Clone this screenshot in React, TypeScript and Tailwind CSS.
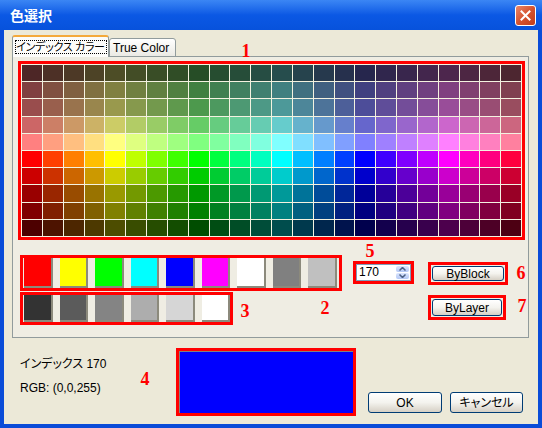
import React from "react";

const PALE = [0.3, 0.5, 0.6, 0.8, 1];
const FULL = [1, 0.8, 0.6, 0.5, 0.3];

function hueColor(col: number): number[] {
  const h = col * 15;
  const sector = Math.floor(h / 60);
  const f = (h % 60) / 60;
  const up = Math.floor(255 * f);
  const down = Math.floor(255 * (1 - f));
  switch (sector) {
    case 0: return [255, up, 0];
    case 1: return [down, 255, 0];
    case 2: return [0, 255, up];
    case 3: return [0, down, 255];
    case 4: return [up, 0, 255];
    default: return [255, 0, down];
  }
}

function cellColor(row: number, col: number): string {
  const base = hueColor(col);
  let rgb: number[];
  if (row < 5) {
    const k = PALE[row];
    rgb = base.map((c) => Math.round((c + (255 - c) / 2) * k));
  } else {
    const k = FULL[row - 5];
    rgb = base.map((c) => Math.round(c * k));
  }
  return `rgb(${rgb[0]},${rgb[1]},${rgb[2]})`;
}

const cells = Array.from({ length: 240 }, (_, i) => cellColor(Math.floor(i / 24), i % 24));

const standard = [
  "bg-[#ff0000]",
  "bg-[#ffff00]",
  "bg-[#00ff00]",
  "bg-[#00ffff]",
  "bg-[#0000ff]",
  "bg-[#ff00ff]",
  "bg-[#ffffff]",
  "bg-[#808080]",
  "bg-[#c0c0c0]",
];

const grays = [
  "bg-[#333333]",
  "bg-[#5b5b5b]",
  "bg-[#848484]",
  "bg-[#adadad]",
  "bg-[#d6d6d6]",
  "bg-[#ffffff]",
];

const jp = "font-['Liberation_Sans','Noto_Sans_CJK_JP',sans-serif] [font-feature-settings:'palt']";

function XpButton({ label, className }: { label: string; className: string }) {
  return (
    <div
      className={`flex items-center justify-center rounded-[3px] border border-[#003c74] bg-gradient-to-b from-[#ffffff] via-[#f4f3ee] to-[#d6d0c5] text-[12px] text-black ${jp} ${className}`}
    >
      {label}
    </div>
  );
}

export default function App() {
  return (
    <div className="w-[542px] h-[428px] flex flex-col overflow-hidden bg-[#0a4cd8] font-['Liberation_Sans',sans-serif]">
      {/* Title bar */}
      <div className="h-[30px] shrink-0 flex items-center justify-between pl-[10px] pr-[6px] bg-gradient-to-b from-[#3b86f4] via-[#0b58e4] to-[#0752dc]">
        <span className="text-white text-[14px] font-bold font-['Noto_Sans_CJK_JP',sans-serif] leading-none">色選択</span>
        <div className="w-[21px] h-[21px] rounded-[3px] border border-white bg-gradient-to-br from-[#e8866a] via-[#d6532f] to-[#c13d18] flex items-center justify-center">
          <svg width="11" height="11" viewBox="0 0 11 11">
            <path d="M1.5 1.5 L9.5 9.5 M9.5 1.5 L1.5 9.5" stroke="white" strokeWidth="2" strokeLinecap="square" />
          </svg>
        </div>
      </div>

      {/* Body */}
      <div className="relative flex-1 mx-[4px] mb-[4px] bg-[#ece9d8] flex flex-col">
        {/* Tabs */}
        <div className="relative z-10 ml-[8px] mt-[5px] h-[22px] -mb-px flex items-end">
          <div className="h-[22px] w-[97px] rounded-t-[3px] border-x border-t-2 border-x-[#919b9c] border-t-[#f4a93a] bg-[#fcfcfa] flex items-center justify-center">
            <span className={`w-[92px] border border-dotted border-black h-[14px] flex items-center justify-center whitespace-nowrap text-[11px] tracking-[-0.3px] leading-none ${jp}`}>
              インデックス カラー
            </span>
          </div>
          <div className="h-[19px] w-[67px] rounded-t-[3px] border border-[#919b9c] bg-gradient-to-b from-[#ffffff] to-[#ebeae4] flex items-center pl-[3px] text-[12px] leading-none">
            True Color
          </div>
        </div>

        {/* Panel */}
        <div className="ml-[8px] w-[517px] h-[282px] border border-[#919b9c] bg-[#efede3] flex flex-col">
          <div className="ml-[5px] mt-[4px] w-[507px] h-[179px] border-[3px] border-[#ff0000]">
            <div className="w-[501px] h-[173px] p-px gap-px bg-[#f4f2e0] grid grid-cols-[repeat(24,minmax(0,1fr))] grid-rows-[repeat(10,minmax(0,1fr))]">
              {cells.map((c, i) => (
                <div key={i} style={{ backgroundColor: c }} />
              ))}
            </div>
          </div>

          <div className="mt-[15px] flex items-start">
            {/* Swatch groups */}
            <div className="ml-[7px] flex flex-col">
              <div className="w-[322px] h-[36px] border-[3px] border-[#ff0000] flex items-center gap-[7px] pl-px">
                {standard.map((c, i) => (
                  <div key={i} className={`w-[28.5px] h-[30px] border-r-2 border-b-2 border-[#8c8a7c] ${c}`} />
                ))}
              </div>
              <div className="mt-px w-[213px] h-[33px] border-[3px] border-[#ff0000] flex items-center gap-[7px] pl-px">
                {grays.map((c, i) => (
                  <div key={i} className={`w-[28.5px] h-[27px] border-r-2 border-b-2 border-[#8c8a7c] ${c}`} />
                ))}
              </div>
            </div>

            {/* Spinner */}
            <div className="ml-[11px] mt-[6px] w-[61px] h-[23px] border-[3px] border-[#ff0000] flex">
              <div className="flex-1 border border-[#7f9db9] bg-white flex">
                <span className="flex-1 pl-[2px] text-[12px] leading-[15px]">170</span>
                <div className="w-[15px] flex flex-col gap-px p-px">
                  <div className="flex-1 rounded-[2px] bg-gradient-to-b from-[#dbe5fc] to-[#b3c7f5] flex items-center justify-center">
                    <svg width="7" height="4" viewBox="0 0 7 4">
                      <path d="M0.5 3.5 L3.5 0.5 L6.5 3.5" stroke="#4d6185" strokeWidth="1.5" fill="none" />
                    </svg>
                  </div>
                  <div className="flex-1 rounded-[2px] bg-gradient-to-b from-[#dbe5fc] to-[#b3c7f5] flex items-center justify-center">
                    <svg width="7" height="4" viewBox="0 0 7 4">
                      <path d="M0.5 0.5 L3.5 3.5 L6.5 0.5" stroke="#4d6185" strokeWidth="1.5" fill="none" />
                    </svg>
                  </div>
                </div>
              </div>
            </div>

            {/* ByBlock / ByLayer */}
            <div className="ml-[14px] mt-[7px] flex flex-col">
              <div className="w-[80px] h-[23px] border-[3px] border-[#ff0000] p-px flex">
                <XpButton label="ByBlock" className="flex-1" />
              </div>
              <div className="mt-[10px] w-[78px] h-[25px] border-[3px] border-[#ff0000] p-px flex">
                <XpButton label="ByLayer" className="flex-1" />
              </div>
            </div>
          </div>
        </div>

        {/* Bottom section */}
        <div className="flex items-start">
          <div className={`ml-[16px] w-[156px] mt-[18px] flex flex-col gap-[8px] text-[12px] leading-[16px] ${jp}`}>
            <span>インデックス 170</span>
            <span>RGB: (0,0,255)</span>
          </div>
          <div className="mt-[10px] w-[180px] h-[68px] border-[3px] border-[#ff0000]">
            <div className="w-full h-full border-t border-l border-[#808080] bg-[#0000ff]" />
          </div>
          <div className="ml-[12px] mt-[54px] flex gap-[8px]">
            <XpButton label="OK" className="w-[74px] h-[21px]" />
            <XpButton label="キャンセル" className="w-[73px] h-[21px]" />
          </div>
        </div>

        {/* Annotation numbers */}
        <span className="absolute left-[242px] top-[21px] -translate-x-1/2 -translate-y-1/2 text-[18px] leading-none font-bold text-[#ff0000] font-['Liberation_Serif',serif]">1</span>
        <span className="absolute left-[321px] top-[278px] -translate-x-1/2 -translate-y-1/2 text-[18px] leading-none font-bold text-[#ff0000] font-['Liberation_Serif',serif]">2</span>
        <span className="absolute left-[241px] top-[281px] -translate-x-1/2 -translate-y-1/2 text-[18px] leading-none font-bold text-[#ff0000] font-['Liberation_Serif',serif]">3</span>
        <span className="absolute left-[141px] top-[349px] -translate-x-1/2 -translate-y-1/2 text-[18px] leading-none font-bold text-[#ff0000] font-['Liberation_Serif',serif]">4</span>
        <span className="absolute left-[366px] top-[221px] -translate-x-1/2 -translate-y-1/2 text-[18px] leading-none font-bold text-[#ff0000] font-['Liberation_Serif',serif]">5</span>
        <span className="absolute left-[517px] top-[243px] -translate-x-1/2 -translate-y-1/2 text-[18px] leading-none font-bold text-[#ff0000] font-['Liberation_Serif',serif]">6</span>
        <span className="absolute left-[518px] top-[276px] -translate-x-1/2 -translate-y-1/2 text-[18px] leading-none font-bold text-[#ff0000] font-['Liberation_Serif',serif]">7</span>
      </div>
    </div>
  );
}
